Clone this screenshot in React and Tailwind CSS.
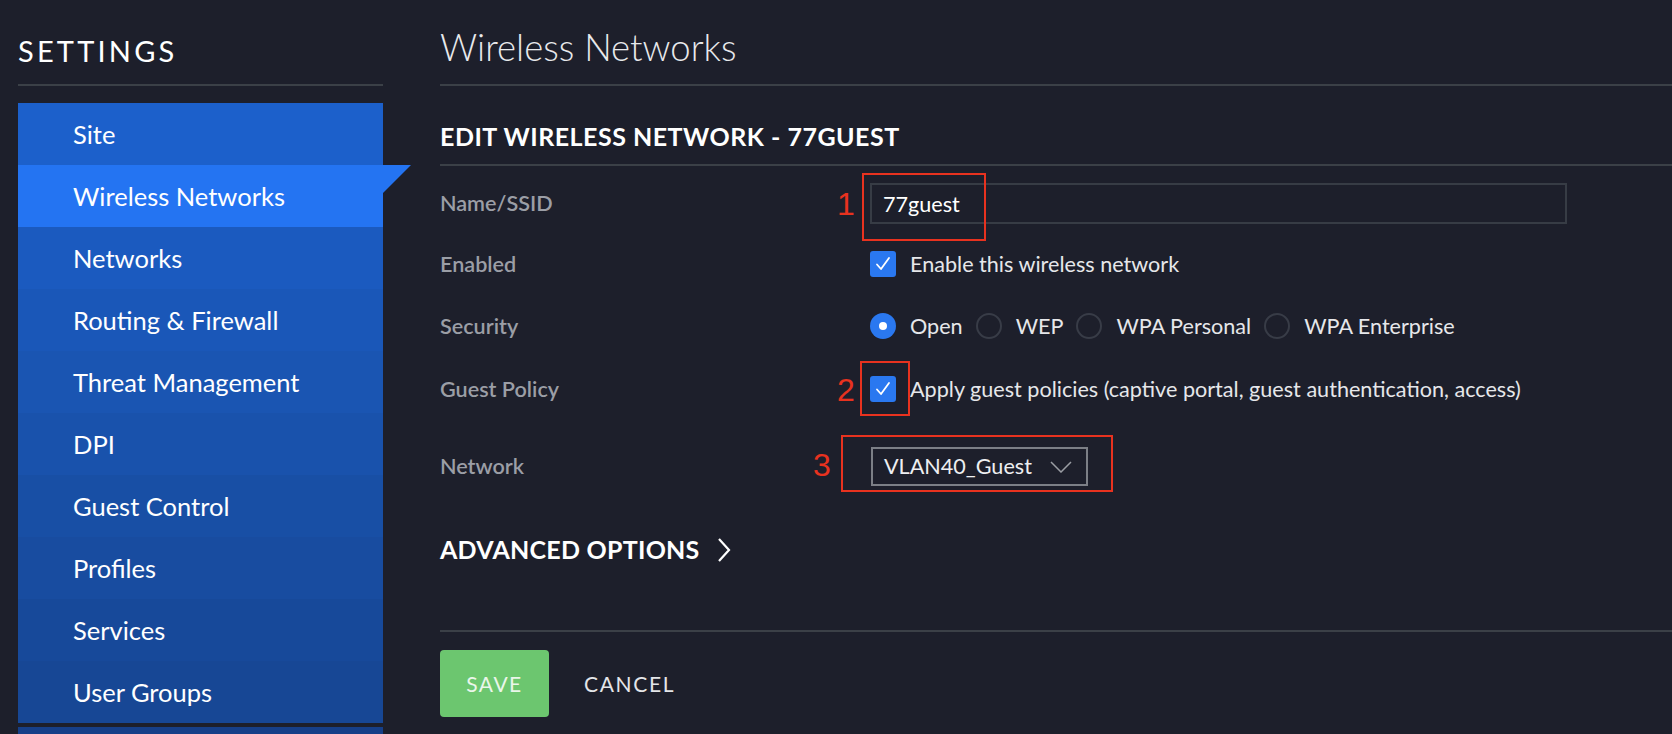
import { useState } from "react";

const menu = [
  { label: "Site", bg: "bg-[#1c60cb]" },
  { label: "Wireless Networks", bg: "bg-[#2474f2]", active: true },
  { label: "Networks", bg: "bg-[#1b5abf]" },
  { label: "Routing & Firewall", bg: "bg-[#1a57b8]" },
  { label: "Threat Management", bg: "bg-[#1a55b2]" },
  { label: "DPI", bg: "bg-[#1952ac]" },
  { label: "Guest Control", bg: "bg-[#184fa5]" },
  { label: "Profiles", bg: "bg-[#184ca0]" },
  { label: "Services", bg: "bg-[#17499a]" },
  { label: "User Groups", bg: "bg-[#174795]" },
];

const Check = () => (
  <span className="flex h-[26px] w-[26px] items-center justify-center rounded-[3px] bg-[#2a78f0]">
    <svg width="18" height="18" viewBox="0 0 18 18" fill="none">
      <path d="M3 9.5l4 4.5 8-11" stroke="white" strokeWidth="1.8" strokeLinecap="round" strokeLinejoin="round" />
    </svg>
  </span>
);

const Radio = ({ on }) =>
  on ? (
    <span className="flex h-[26px] w-[26px] items-center justify-center rounded-full bg-[#2a78f0]">
      <span className="h-[8px] w-[8px] rounded-full bg-white" />
    </span>
  ) : (
    <span className="h-[26px] w-[26px] rounded-full border-2 border-[#383c47]" />
  );

const Mark = ({ n, className }) => (
  <span
    className={
      "absolute font-['Liberation_Sans',sans-serif] text-[32px] leading-none text-[#e8321f] " +
      className
    }
  >
    {n}
  </span>
);

export default function App() {
  const [security, setSecurity] = useState("Open");

  return (
    <div className="flex h-[734px] overflow-hidden bg-[#1d1f2b] font-['Lato',sans-serif] text-white">
      {/* sidebar */}
      <div className="ml-[18px] w-[365px] shrink-0">
        <div className="h-[86px] border-b-2 border-[#3b4047] pt-[31px]">
          <h1 className="text-[29px] leading-[40px] tracking-[0.11em]">SETTINGS</h1>
        </div>
        <ul className="mt-[17px]">
          {menu.map((m) => (
            <li
              key={m.label}
              className={"relative flex h-[62px] items-center pl-[55px] text-[25.5px] " + m.bg}
            >
              {m.label}
              {m.active && (
                <svg className="absolute left-full top-0" width="28" height="28" viewBox="0 0 28 28">
                  <path d="M0 0h28L0 28z" fill="#2474f2" />
                </svg>
              )}
            </li>
          ))}
          <li className="mt-[4px] h-[62px] bg-[#163f88]" />
        </ul>
      </div>

      {/* main */}
      <div className="ml-[57px] flex-1">
        <div className="h-[86px] border-b-2 border-[#3b4047] pt-[24px]">
          <h2 className="text-[36.5px] font-light leading-[46px] text-[#e8e9ec]">Wireless Networks</h2>
        </div>
        <div className="border-b-2 border-[#3b4047] pb-[13px] pt-[35px]">
          <h3 className="text-[25px] font-bold leading-[30px] tracking-[0.02em]">
            EDIT WIRELESS NETWORK - 77GUEST
          </h3>
        </div>

        <div className="text-[21.6px]">
          <div className="mt-[17px] flex h-[41px] items-center">
            <span className="w-[430px] font-semibold text-[#9b9ea6]">Name/SSID</span>
            <div className="relative h-full w-[697px]">
              <input
                defaultValue="77guest"
                className="h-full w-full border-2 border-[#373c45] bg-transparent px-[11px] text-[21.6px] text-white outline-none"
              />
              <span className="absolute left-[-8px] top-[-10px] h-[68px] w-[124px] border-2 border-[#e8321f]" />
              <Mark n="1" className="left-[-33px] top-[5px]" />
            </div>
          </div>

          <div className="mt-[25px] flex h-[30px] items-center">
            <span className="w-[430px] font-semibold text-[#9b9ea6]">Enabled</span>
            <Check />
            <span className="ml-[14px] text-[#e6e7ea]">Enable this wireless network</span>
          </div>

          <div className="mt-[32px] flex h-[30px] items-center">
            <span className="w-[430px] font-semibold text-[#9b9ea6]">Security</span>
            {["Open", "WEP", "WPA Personal", "WPA Enterprise"].map((s, i) => (
              <button
                key={s}
                onClick={() => setSecurity(s)}
                className={"flex items-center " + (i ? "ml-[13px]" : "")}
              >
                <Radio on={security === s} />
                <span className="ml-[14px] text-[#e6e7ea]">{s}</span>
              </button>
            ))}
          </div>

          <div className="mt-[33px] flex h-[30px] items-center">
            <span className="w-[430px] font-semibold text-[#9b9ea6]">Guest Policy</span>
            <div className="relative">
              <Check />
              <span className="absolute left-[-10px] top-[-15px] h-[55px] w-[50px] border-2 border-[#e8321f]" />
              <Mark n="2" className="left-[-33px] top-[-2px]" />
            </div>
            <span className="ml-[14px] text-[#e6e7ea]">
              Apply guest policies (captive portal, guest authentication, access)
            </span>
          </div>

          <div className="mt-[43px] flex h-[39px] items-center">
            <span className="w-[431px] font-semibold text-[#9b9ea6]">Network</span>
            <div className="relative h-full">
              <div className="flex h-full w-[217px] items-center justify-between border-2 border-[#7c7f86] pl-[11px] pr-[14px] text-[#eeeff1]">
                VLAN40_Guest
                <svg width="22" height="12" viewBox="0 0 22 12" fill="none">
                  <path d="M1 1l10 10L21 1" stroke="#9a9da3" strokeWidth="1.5" />
                </svg>
              </div>
              <span className="absolute left-[-30px] top-[-12px] h-[57px] w-[272px] border-2 border-[#e8321f]" />
              <Mark n="3" className="left-[-58px] top-[2px]" />
            </div>
          </div>
        </div>

        <div className="mt-[49px] flex h-[30px] items-center">
          <span className="text-[25px] font-bold tracking-[0.01em]">ADVANCED OPTIONS</span>
          <svg className="ml-[17px]" width="14" height="24" viewBox="0 0 14 24" fill="none">
            <path d="M2 1l10 11L2 23" stroke="white" strokeWidth="2.2" />
          </svg>
        </div>

        <div className="mt-[65px] border-t-2 border-[#3b4047]" />

        <div className="mt-[18px] flex items-center">
          <button className="h-[67px] w-[109px] rounded-[4px] bg-[#6cc66f] text-[21px] tracking-[0.07em] text-[#eaf6ea]">
            SAVE
          </button>
          <button className="ml-[35px] text-[21px] tracking-[0.08em] text-[#e4e5e8]">CANCEL</button>
        </div>
      </div>
    </div>
  );
}
